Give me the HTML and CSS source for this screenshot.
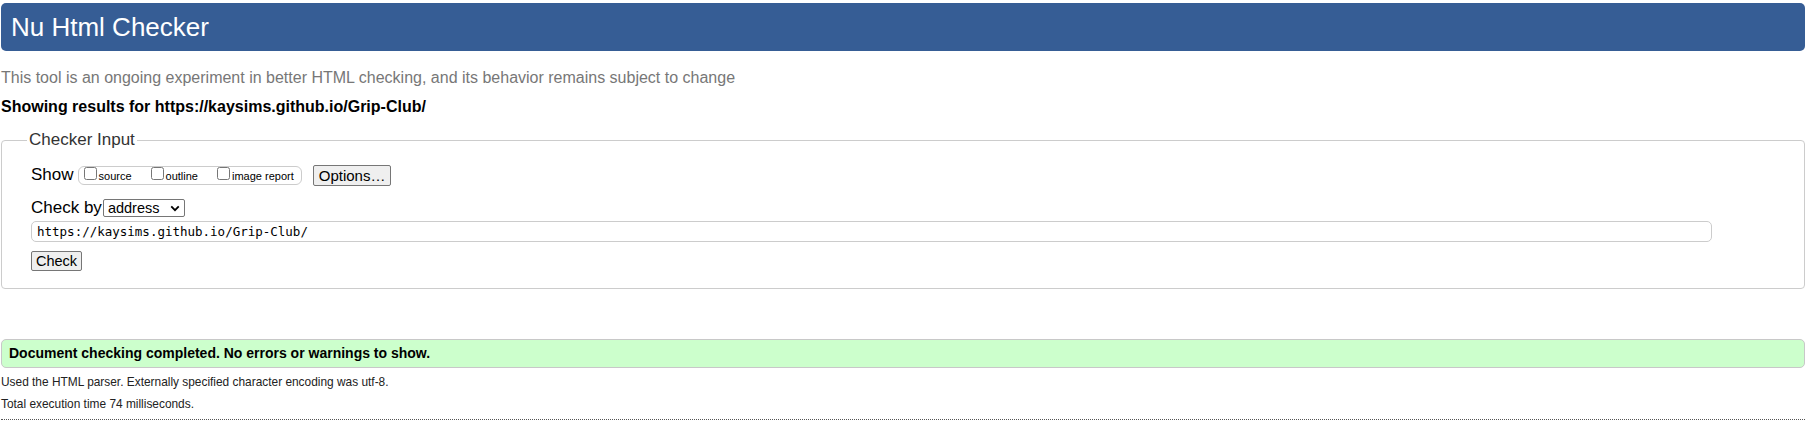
FILE: index.html
```html
<!DOCTYPE html>
<html lang="en">
<head>
<meta charset="utf-8">
<title>Showing results for https://kaysims.github.io/Grip-Club/ - Nu Html Checker</title>
<link rel="stylesheet" href="styles.css">
</head>
<body>
<h1 class="title">Nu Html Checker</h1>
<p class="intro">This tool is an ongoing experiment in better HTML checking, and its behavior remains subject to change</p>
<p class="showing">Showing results for https://kaysims.github.io/Grip-Club/</p>
<form class="checker">
  <fieldset class="input-box">
    <legend class="legend">Checker Input</legend>
    <div class="row show-row">
      <span class="label">Show</span>
      <fieldset class="show-group">
        <label class="opt"><input type="checkbox" class="cb"><span>source</span></label>
        <label class="opt"><input type="checkbox" class="cb"><span>outline</span></label>
        <label class="opt"><input type="checkbox" class="cb"><span>image report</span></label>
      </fieldset>
      <button type="button" class="btn options">Options…</button>
    </div>
    <div class="row by-row">
      <span class="label">Check by</span>
      <span class="select">address<svg class="chev" viewBox="0 0 12 8" width="12" height="8"><path d="M1.5 1.5 L6 6 L10.5 1.5" fill="none" stroke="#000" stroke-width="2.2"/></svg></span>
    </div>
    <div class="url">https://kaysims.github.io/Grip-Club/</div>
    <div class="row check-row">
      <button type="button" class="btn check">Check</button>
    </div>
  </fieldset>
</form>
<div class="success">Document checking completed. No errors or warnings to show.</div>
<p class="meta">Used the HTML parser. Externally specified character encoding was utf-8.</p>
<p class="meta">Total execution time 74 milliseconds.</p>
<hr class="dots">
</body>
</html>
```
FILE: styles.css
```css
html, body {
  margin: 0;
  background: #fff;
}
body {
  padding: 3px 4px 0 1px;
  font-family: "Liberation Sans", Arial, sans-serif;
  color: #000;
}
.title {
  margin: 0;
  height: 48px;
  line-height: 48px;
  padding: 0 0 0 10px;
  background: #365d95;
  color: #fff;
  font-size: 26px;
  font-weight: normal;
  border-radius: 5px;
}
.intro {
  margin: 17px 0 0 0;
  font-size: 16px;
  line-height: 19px;
  color: #777;
}
.showing {
  margin: 10px 0 0 0;
  font-size: 16px;
  line-height: 19px;
  font-weight: bold;
}
.checker {
  margin: 0;
}
.input-box {
  margin: 14px 0 0 0;
  border: 1px solid #ccc;
  border-radius: 4px;
  padding: 10px 20px 17px 29px;
  min-width: 0;
}
.legend {
  margin-left: -4px;
  padding: 0 2px;
  font-size: 17px;
  color: #333;
}
.row {
  display: flex;
  align-items: center;
}
.label {
  font-size: 17px;
  line-height: 20px;
}
.show-row {
  margin-top: 4px;
  height: 22px;
}
.show-group {
  display: flex;
  align-items: center;
  margin: 0 0 0 4px;
  padding: 0 7px 0 4px;
  height: 19px;
  box-sizing: border-box;
  border: 1px solid #ccc;
  border-radius: 6px;
}
.opt {
  display: flex;
  align-items: flex-start;
  font-size: 11px;
  line-height: 13px;
  margin-right: 18px;
}
.opt span {
  padding-top: 3px;
}
.opt:last-child {
  margin-right: 0;
}
.cb {
  margin: 0 2px 0 1px;
  width: 13px;
  height: 13px;
}
.btn {
  font-family: "Liberation Sans", Arial, sans-serif;
  font-size: 15px;
  background: #efefef;
  border: 1px solid #767676;
  border-radius: 2px;
  color: #000;
  padding: 0 5px;
  height: 21px;
  line-height: 19px;
}
.options {
  margin-left: 11px;
}
.by-row {
  margin-top: 12px;
}
.select {
  display: inline-flex;
  align-items: center;
  justify-content: space-between;
  box-sizing: border-box;
  margin-left: 1px;
  width: 82px;
  height: 18px;
  padding: 0 4px 0 4px;
  border: 1px solid #767676;
  border-radius: 2px;
  font-size: 14.5px;
  background: #fff;
}
.chev {
  width: 10px;
  height: 7px;
}
.url {
  margin-top: 3px;
  width: 1681px;
  box-sizing: border-box;
  height: 21px;
  line-height: 19px;
  border: 1px solid #ccc;
  border-radius: 5px;
  padding: 0 5px;
  font-family: "DejaVu Sans Mono", "Liberation Mono", monospace;
  font-size: 12.5px;
  color: #000;
}
.check-row {
  margin-top: 9px;
}
.check {
  height: 20px;
  font-size: 14.5px;
  padding: 0 4px;
}
.success {
  margin-top: 50px;
  height: 29px;
  box-sizing: border-box;
  line-height: 26px;
  padding: 0 7px;
  background: #ccffcc;
  border: 1px solid #c8c8c8;
  border-radius: 5px;
  font-weight: bold;
  font-size: 14px;
}
.meta {
  margin: 6px 0 0 0;
  font-size: 11.9px;
  line-height: 16px;
  color: #222;
}
.dots {
  margin: 7px 0 0 0;
  border: 0;
  border-top: 1px dotted #555;
  height: 0;
}
```
